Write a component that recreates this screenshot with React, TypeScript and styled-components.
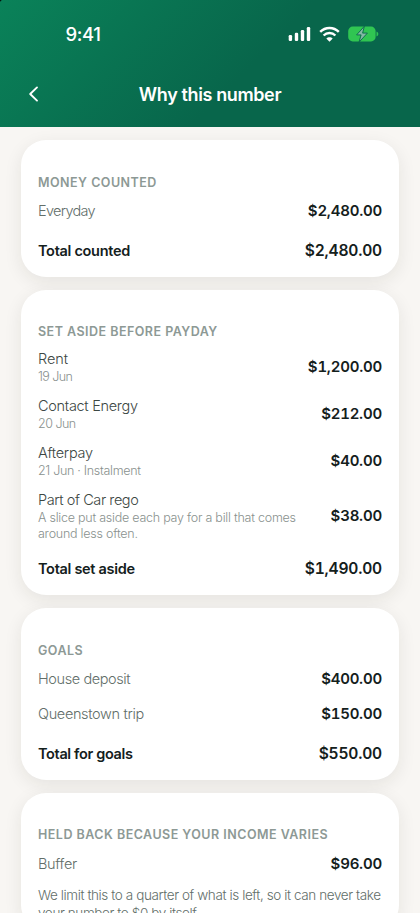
import React from "react";
import styled, { createGlobalStyle } from "styled-components";

const GlobalStyle = createGlobalStyle`
  * { box-sizing: border-box; }
  body {
    margin: 0;
    background: #f8f6f3;
    font-family: Inter, sans-serif;
    color: #14201c;
  }
`;

const Screen = styled.main`
  width: 420px;
  height: 913px;
  overflow: hidden;
  background: #f8f6f3;
`;

const Header = styled.header`
  height: 127px;
  color: #fff;
  background:
    linear-gradient(135deg, #04150f 0, #04150f 1px, transparent 1.6px),
    linear-gradient(135deg, #0a8259 0%, #08664b 58%, #08664b 100%);
`;

const StatusBar = styled.div`
  height: 67px;
  padding: 0 41px 0 65.5px;
  display: flex;
  align-items: center;
  justify-content: space-between;
`;

const Clock = styled.time`
  font-size: 18.5px;
  font-weight: 550;
  letter-spacing: -0.4px;
`;

const StatusIcons = styled.div`
  display: flex;
  align-items: center;
  gap: 8px;
`;

const NavBar = styled.nav`
  height: 54px;
  display: grid;
  grid-template-columns: 60px 1fr 60px;
  align-items: center;
`;

const BackButton = styled.button`
  height: 44px;
  padding: 0 0 0 27px;
  display: flex;
  align-items: center;
  border: 0;
  background: none;
  color: inherit;
`;

const Title = styled.h1`
  margin: 0;
  text-align: center;
  font-size: 18px;
  font-weight: 600;
  letter-spacing: -0.38px;
`;

const CardList = styled.div`
  padding: 13.3px 21.5px 13px 21.4px;
  display: flex;
  flex-direction: column;
  gap: 13.2px;
`;

const Card = styled.section`
  padding: 34.4px 16.6px 8px;
  border-radius: 25px;
  background: #fff;
  box-shadow: 0 5px 18px rgba(35, 35, 25, 0.085);
`;

const SectionTitle = styled.h2`
  height: 16px;
  margin: 0 0 3.2px;
  font-size: 12.5px;
  line-height: 16.4px;
  font-weight: 600;
  letter-spacing: 0.48px;
  text-transform: uppercase;
  white-space: nowrap;
  color: #8d9995;
`;

const Row = styled.div`
  min-height: 35px;
  padding: 5.5px 0;
  display: flex;
  align-items: center;
  justify-content: space-between;
`;

const TotalRow = styled(Row)`
  margin-top: 4.8px;
`;

const RowText = styled.div`
  flex: 1;
  min-width: 0;
`;

const Label = styled.div<{ $tone?: "detail" | "total"; $tracking?: number }>`
  font-size: 14.5px;
  line-height: 20.3px;
  font-weight: ${({ $tone }) => ($tone === "total" ? 600 : 300)};
  letter-spacing: ${({ $tracking = -0.3 }) => $tracking}px;
  white-space: nowrap;
  color: ${({ $tone }) =>
    $tone === "total" ? "#14201c" : $tone === "detail" ? "#3c4743" : "#626e69"};
`;

const Note = styled.div<{ $tracking?: number }>`
  font-size: 12.5px;
  line-height: 15.7px;
  font-weight: 300;
  letter-spacing: ${({ $tracking = -0.24 }) => $tracking}px;
  white-space: pre-line;
  color: #89918e;
`;

const Amount = styled.div<{ $total?: boolean }>`
  font-size: ${({ $total }) => ($total ? 15.6 : 15)}px;
  line-height: 20px;
  font-weight: 600;
  font-variant-numeric: tabular-nums;
  letter-spacing: -0.22px;
`;

const Explanation = styled.p`
  margin: 5px 0 0;
  font-size: 13.5px;
  line-height: 18px;
  font-weight: 300;
  letter-spacing: -0.4px;
  white-space: pre;
  color: #626e69;
`;

interface Item {
  label: string;
  amount: string;
  tracking?: number;
  note?: string;
  noteTracking?: number;
}

interface Section {
  title: string;
  items: Item[];
  total?: Item;
  explanation?: string;
}

const sections: Section[] = [
  {
    title: "Money counted",
    items: [{ label: "Everyday", amount: "$2,480.00", tracking: -0.7 }],
    total: { label: "Total counted", amount: "$2,480.00" },
  },
  {
    title: "Set aside before payday",
    items: [
      { label: "Rent", amount: "$1,200.00", tracking: -0.1, note: "19 Jun", noteTracking: -0.6 },
      { label: "Contact Energy", amount: "$212.00", note: "20 Jun", noteTracking: -0.5 },
      { label: "Afterpay", amount: "$40.00", note: "21 Jun · Instalment", noteTracking: -0.3 },
      {
        label: "Part of Car rego",
        amount: "$38.00",
        tracking: -0.42,
        note: "A slice put aside each pay for a bill that comes\naround less often.",
      },
    ],
    total: { label: "Total set aside", amount: "$1,490.00" },
  },
  {
    title: "Goals",
    items: [
      { label: "House deposit", amount: "$400.00", tracking: -0.4 },
      { label: "Queenstown trip", amount: "$150.00", tracking: -0.35 },
    ],
    total: { label: "Total for goals", amount: "$550.00", tracking: -0.35 },
  },
  {
    title: "Held back because your income varies",
    items: [{ label: "Buffer", amount: "$96.00" }],
    explanation:
      "We limit this to a quarter of what is left, so it can never take\nyour number to $0 by itself.",
  },
];

const SignalIcon = () => (
  <svg width="23" height="16" viewBox="0 0 23 16" fill="#fff">
    <rect x="0.7" y="9" width="3.4" height="6" rx="1.2" />
    <rect x="6.8" y="6.7" width="3.4" height="8.3" rx="1.2" />
    <rect x="12.8" y="4" width="3.4" height="11" rx="1.2" />
    <rect x="18.8" y="1" width="3.4" height="14" rx="1.2" />
  </svg>
);

const WifiIcon = () => (
  <svg width="21" height="16" viewBox="0 0 21 16" fill="none" stroke="#fff" strokeWidth="2.4">
    <path d="M1.2 5.9C6.3.6 14.7.6 19.8 5.9" />
    <path d="M4.6 9.5c3.3-3.3 8.5-3.3 11.8 0" />
    <path d="M10.5 15.7 7.3 12.6c1.7-1.7 4.7-1.7 6.4 0z" fill="#fff" stroke="none" />
  </svg>
);

const BatteryIcon = () => (
  <svg width="31" height="18" viewBox="0 0 31 18">
    <rect x="0.2" y="1.6" width="27.4" height="14.8" rx="4.5" fill="#30c552" />
    <path d="M28.5 6.5c2.4.7 2.4 4.3 0 5z" fill="#30c552" />
    <path
      d="M16.4 1.2 8.6 9.9h4.5l-2.1 7.3 8.4-9.1h-4.8z"
      fill="#83b9a3"
      stroke="#08664b"
      strokeWidth="0.9"
      strokeLinejoin="round"
    />
  </svg>
);

const BackIcon = () => (
  <svg width="14" height="18" viewBox="0 0 14 18" fill="none">
    <path
      d="M10 2.4 3.2 9l6.8 6.6"
      stroke="#fff"
      strokeWidth="1.9"
      strokeLinecap="round"
      strokeLinejoin="round"
    />
  </svg>
);

export default function App() {
  return (
    <>
      <GlobalStyle />
      <Screen>
        <Header>
          <StatusBar>
            <Clock>9:41</Clock>
            <StatusIcons>
              <SignalIcon />
              <WifiIcon />
              <BatteryIcon />
            </StatusIcons>
          </StatusBar>
          <NavBar>
            <BackButton aria-label="Back">
              <BackIcon />
            </BackButton>
            <Title>Why this number</Title>
          </NavBar>
        </Header>
        <CardList>
          {sections.map(({ title, items, total, explanation }) => (
            <Card key={title}>
              <SectionTitle>{title}</SectionTitle>
              {items.map((item) => (
                <Row key={item.label}>
                  <RowText>
                    <Label $tone={item.note ? "detail" : undefined} $tracking={item.tracking}>
                      {item.label}
                    </Label>
                    {item.note && <Note $tracking={item.noteTracking}>{item.note}</Note>}
                  </RowText>
                  <Amount>{item.amount}</Amount>
                </Row>
              ))}
              {total && (
                <TotalRow>
                  <Label $tone="total" $tracking={total.tracking}>
                    {total.label}
                  </Label>
                  <Amount $total>{total.amount}</Amount>
                </TotalRow>
              )}
              {explanation && <Explanation>{explanation}</Explanation>}
            </Card>
          ))}
        </CardList>
      </Screen>
    </>
  );
}
